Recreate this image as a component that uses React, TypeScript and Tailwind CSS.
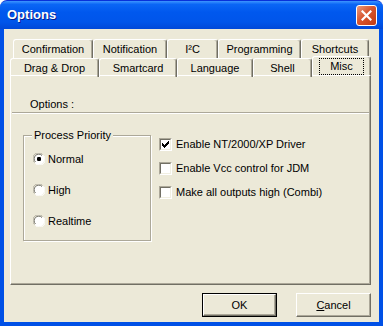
import React from "react";

const font = { fontFamily: '"Liberation Sans", Arial, sans-serif' };

const Tab = ({ label, w, selected }: { label: string; w: string; selected?: boolean }) => (
  <div
    className={`${w} ${
      selected ? "h-[19px] -mb-[1px] -mt-[2px] z-10 bg-[#ECE9D8]" : "h-[19px]"
    } relative flex items-center justify-center rounded-t-[3px] border-l border-t border-r border-l-white border-t-white border-r-[#716F64] shadow-[inset_-1px_0_0_#ACA899] text-[11px] text-black`}
  >
    {selected ? (
      <span className="px-[10px] py-[1px] border border-dotted border-black leading-[13px]">{label}</span>
    ) : (
      <span className="leading-[13px]">{label}</span>
    )}
  </div>
);

const Radio = ({ checked }: { checked?: boolean }) => (
  <svg width="12" height="12" viewBox="0 0 12 12" className="shrink-0">
    <circle cx="6" cy="6" r="5.5" fill="white" />
    <path d="M1.5 9.5 A5.5 5.5 0 0 1 9.5 1.5" stroke="#ACA899" strokeWidth="1" fill="none" />
    <path d="M2.5 9 A4.5 4.5 0 0 1 9 2.5" stroke="#716F64" strokeWidth="1" fill="none" />
    <path d="M10.5 2.5 A5.5 5.5 0 0 1 2.5 10.5" stroke="#ffffff" strokeWidth="1" fill="none" />
    {checked && <rect x="4" y="4" width="4" height="4" rx="1.2" fill="black" />}
  </svg>
);

const Check = ({ checked }: { checked?: boolean }) => (
  <div className="w-[13px] h-[13px] shrink-0 border border-t-[#ACA899] border-l-[#ACA899] border-r-white border-b-white">
    <div className="w-full h-full bg-white border border-t-[#716F64] border-l-[#716F64] border-r-[#F1EFE2] border-b-[#F1EFE2] flex items-center justify-center">
      {checked && (
        <svg width="7" height="7" viewBox="0 0 7 7">
          <path d="M0 2h1v1h1v1h1v-1h1v-1h1v-1h1v-1h1v3h-1v1h-1v1h-1v1h-1v1h-1v-1h-1v-1h-1z" fill="black" />
        </svg>
      )}
    </div>
  </div>
);

const Button = ({ children, def }: { children: React.ReactNode; def?: boolean }) => (
  <div className={`w-[75px] h-[24px] ${def ? "border border-black" : ""}`}>
    <div className="w-full h-full border border-t-white border-l-white border-r-[#716F64] border-b-[#716F64] shadow-[inset_-1px_-1px_0_#ACA899] bg-[#ECE9D8] flex items-center justify-center text-[11px] text-black">
      {children}
    </div>
  </div>
);

export default function App() {
  return (
    <div className="w-[383px] h-[326px] bg-white flex flex-col select-none" style={font}>
      {/* title bar */}
      <div className="h-[29px] shrink-0 rounded-t-[7px] bg-[linear-gradient(180deg,#3D95FF_0%,#0A66F5_12%,#0058EE_40%,#0055EA_75%,#0048D8_100%)] flex items-center pl-[7px] pr-[6px] border-t border-[#0831D9]">
        <span className="text-white font-bold text-[13px] [text-shadow:1px_1px_0_#0A1E8C]">Options</span>
        <div className="ml-auto w-[21px] h-[21px] rounded-[3px] border border-white bg-[linear-gradient(135deg,#E99A7E_0%,#D8562F_45%,#C23A10_100%)] flex items-center justify-center">
          <svg width="11" height="11" viewBox="0 0 11 11">
            <path d="M1.5 1.5L9.5 9.5M9.5 1.5L1.5 9.5" stroke="white" strokeWidth="2.2" strokeLinecap="square" />
          </svg>
        </div>
      </div>

      {/* body */}
      <div className="flex-1 flex flex-col bg-[#ECE9D8] border-x-4 border-b-4 border-[#0050E6] pl-[6px] pr-[8px] pt-[10px]">
        {/* tabs */}
        <div className="flex ml-[3px]">
          <Tab label="Confirmation" w="w-[80px]" />
          <Tab label="Notification" w="w-[74px]" />
          <Tab label="I²C" w="w-[51px]" />
          <Tab label="Programming" w="w-[83px]" />
          <Tab label="Shortcuts" w="w-[68px]" />
        </div>
        <div className="flex h-[17px]">
          <Tab label="Drag & Drop" w="w-[89px]" />
          <Tab label="Smartcard" w="w-[78px]" />
          <Tab label="Language" w="w-[76px]" />
          <Tab label="Shell" w="w-[59px]" />
          <Tab label="Misc" w="w-[59px]" selected />
        </div>

        {/* panel */}
        <div className="h-[210px] border border-t-white border-l-white border-r-[#716F64] border-b-[#716F64] shadow-[inset_-1px_-1px_0_#ACA899] flex flex-col text-[11px] text-black">
          <div className="pl-[19px] pt-[22px] leading-[13px]">Options :</div>
          <div className="mt-[1px] mx-[1px] h-[2px] border-t border-[#ACA899] border-b border-b-white" />
          <div className="flex pl-[12px] pt-[21px] gap-[8px]">
            <div className="relative w-[128px] h-[106px] border border-[#ACA899] shadow-[inset_1px_1px_0_white,1px_1px_0_white]">
              <span className="absolute -top-[7px] left-[8px] px-[2px] bg-[#ECE9D8] leading-[13px]">Process Priority</span>
              <div className="flex flex-col gap-[19px] pt-[17px] pl-[9px]">
                <div className="flex items-center gap-[3px] h-[12px]">
                  <Radio checked />
                  <span>Normal</span>
                </div>
                <div className="flex items-center gap-[3px] h-[12px]">
                  <Radio />
                  <span>High</span>
                </div>
                <div className="flex items-center gap-[3px] h-[12px]">
                  <Radio />
                  <span>Realtime</span>
                </div>
              </div>
            </div>
            <div className="flex flex-col gap-[11px] pt-[3px]">
              <div className="flex items-center gap-[4px] h-[13px]">
                <Check checked />
                <span>Enable NT/2000/XP Driver</span>
              </div>
              <div className="flex items-center gap-[4px] h-[13px]">
                <Check />
                <span>Enable Vcc control for JDM</span>
              </div>
              <div className="flex items-center gap-[4px] h-[13px]">
                <Check />
                <span>Make all outputs high (Combi)</span>
              </div>
            </div>
          </div>
        </div>

        {/* buttons */}
        <div className="flex justify-end gap-[19px] mt-[8px]">
          <Button def>OK</Button>
          <Button>
            <span>
              <span className="underline">C</span>ancel
            </span>
          </Button>
        </div>
      </div>
    </div>
  );
}
